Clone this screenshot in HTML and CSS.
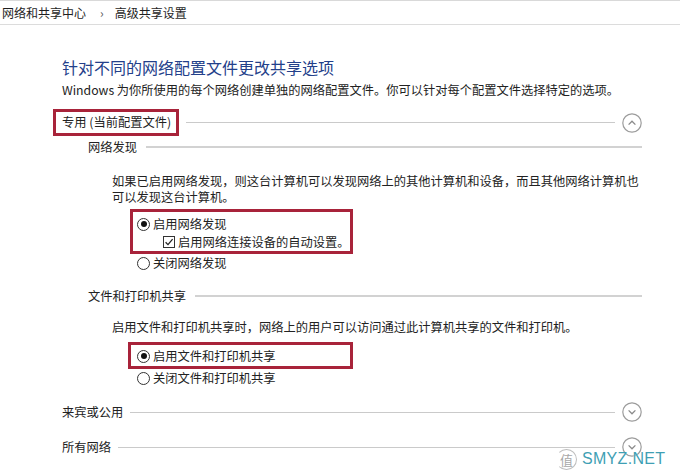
FILE: index.html
```html
<!DOCTYPE html>
<html lang="zh-CN">
<head>
<meta charset="utf-8">
<title>高级共享设置</title>
<link rel="stylesheet" href="styles.css">
</head>
<body>
<div class="crumb">
  <span>网络和共享中心</span><span class="sep">›</span><span>高级共享设置</span>
</div>
<div class="main">
  <h1 class="title">针对不同的网络配置文件更改共享选项</h1>
  <p class="desc">Windows 为你所使用的每个网络创建单独的网络配置文件。你可以针对每个配置文件选择特定的选项。</p>

  <div class="sec sec-first">
    <span class="sec-label boxed">专用 (当前配置文件)</span>
    <span class="rule"></span>
    <span class="toggle"><svg width="20" height="20" viewBox="0 0 20 20"><circle cx="10" cy="10" r="9.2" fill="none" stroke="#9c9c9c" stroke-width="1.2"/><path d="M6.6 11.6 L10 8.2 L13.4 11.6" fill="none" stroke="#8a8a8a" stroke-width="1.3"/></svg></span>
  </div>

  <div class="sub sub-net">
    <span class="sub-label">网络发现</span>
    <span class="rule"></span>
  </div>
  <p class="para para-net">如果已启用网络发现，则这台计算机可以发现网络上的其他计算机和设备，而且其他网络计算机也<br>可以发现这台计算机。</p>

  <div class="opts opts-net">
    <div class="box box-net">
      <div class="opt"><span class="radio checked"></span><span>启用网络发现</span></div>
      <div class="opt opt-check"><span class="check"><svg width="12" height="12" viewBox="0 0 12 12"><rect x="0.5" y="0.5" width="11" height="11" fill="#fff" stroke="#333" stroke-width="1"/><path d="M2.6 6.2 L5 8.6 L9.6 3.2" fill="none" stroke="#222" stroke-width="1.3"/></svg></span><span>启用网络连接设备的自动设置。</span></div>
    </div>
    <div class="opt opt-plain"><span class="radio"></span><span>关闭网络发现</span></div>
  </div>

  <div class="sub sub-file">
    <span class="sub-label">文件和打印机共享</span>
    <span class="rule"></span>
  </div>
  <p class="para para-file">启用文件和打印机共享时，网络上的用户可以访问通过此计算机共享的文件和打印机。</p>

  <div class="opts opts-file">
    <div class="box box-file">
      <div class="opt"><span class="radio checked"></span><span>启用文件和打印机共享</span></div>
    </div>
    <div class="opt opt-plain"><span class="radio"></span><span>关闭文件和打印机共享</span></div>
  </div>

  <div class="sec sec-guest">
    <span class="sec-label">来宾或公用</span>
    <span class="rule"></span>
    <span class="toggle"><svg width="20" height="20" viewBox="0 0 20 20"><circle cx="10" cy="10" r="9.2" fill="none" stroke="#9c9c9c" stroke-width="1.2"/><path d="M6.6 8.4 L10 11.8 L13.4 8.4" fill="none" stroke="#8a8a8a" stroke-width="1.3"/></svg></span>
  </div>

  <div class="sec sec-all">
    <span class="sec-label">所有网络</span>
    <span class="rule"></span>
    <span class="toggle"><svg width="20" height="20" viewBox="0 0 20 20"><circle cx="10" cy="10" r="9.2" fill="none" stroke="#9c9c9c" stroke-width="1.2"/><path d="M6.6 8.4 L10 11.8 L13.4 8.4" fill="none" stroke="#8a8a8a" stroke-width="1.3"/></svg></span>
  </div>
</div>

<div class="watermark">
  <span class="wm-logo">值</span><span class="wm-text">SMYZ.NET</span>
</div>
</body>
</html>
```

FILE: styles.css
```css
html, body {
  margin: 0;
  padding: 0;
  background: #ffffff;
}
body {
  width: 680px;
  height: 476px;
  overflow: hidden;
  position: relative;
  font-family: "Noto Sans CJK SC", "Noto Sans", sans-serif;
  font-size: 12.25px;
  color: #222222;
}

.crumb {
  height: 23px;
  border-top: 1px solid #d9d9d9;
  border-bottom: 1px solid #dcdcdc;
  line-height: 24px;
  padding-left: 2px;
  font-size: 12px;
  color: #1e1e1e;
  white-space: nowrap;
}
.crumb .sep {
  margin: 0 11px 0 14px;
  color: #555;
}

.main {
  padding: 0 38px 0 62px;
}

.title {
  margin: 31px 0 0 0;
  font-size: 16px;
  font-weight: normal;
  line-height: 22px;
  color: #23408a;
  white-space: nowrap;
}
.desc {
  margin: 3px 0 0 0;
  line-height: 18px;
  white-space: nowrap;
}

.sec {
  display: flex;
  align-items: center;
  height: 27px;
}
.sec-first { margin-top: 10px; }
.sec-guest { margin-top: 14px; height: 22px; }
.sec-all { margin-top: 13px; height: 22px; }

.sec-label {
  white-space: nowrap;
  line-height: 21px;
}
.boxed {
  margin-left: -9px;
  padding: 0 5px 0 6px;
  border: 3px solid #a8233a;
}
.rule {
  flex: 1;
  height: 1px;
  background: #cacaca;
  margin: 0 7px;
}
.toggle {
  width: 20px;
  height: 20px;
  display: block;
  flex: none;
}
.toggle svg { display: block; }

.sub {
  display: flex;
  align-items: center;
  height: 20px;
  margin-left: 26px;
}
.sub .rule {
  margin: 0 0 0 9px;
  background: #d2d2d2;
  height: 1.5px;
}
.sub-net { margin-top: 1px; }
.sub-file { margin-top: 14px; }
.sub-label { white-space: nowrap; }

.para {
  margin: 0 0 0 50px;
  line-height: 16px;
  white-space: nowrap;
}
.para-net { margin-top: 16px; }
.para-file { margin-top: 13px; }

.opts {
  margin-left: 68px;
}
.opts-net { margin-top: 4px; }
.opts-file { margin-top: 7px; }

.box {
  width: 213px;
  border: 3px solid #a8233a;
  padding-left: 4px;
}
.box-net { padding-top: 3px; padding-bottom: 0; }
.box-file { padding-top: 2px; padding-bottom: 1px; }
.box-file { margin-left: -2px; padding-left: 6px; }

.opt {
  display: flex;
  align-items: center;
  height: 18px;
  white-space: nowrap;
}
.opt-plain { padding-left: 7px; }
.opt-check { padding-left: 26px; }

.radio {
  width: 11px;
  height: 11px;
  border: 1px solid #333;
  border-radius: 50%;
  margin-right: 3px;
  position: relative;
  flex: none;
  background: #fff;
}
.radio.checked::after {
  content: "";
  position: absolute;
  left: 2.5px;
  top: 2.5px;
  width: 6px;
  height: 6px;
  border-radius: 50%;
  background: #111;
}
.check {
  width: 12px;
  height: 12px;
  margin-right: 3px;
  flex: none;
}
.check svg { display: block; }

.watermark {
  position: absolute;
  left: 556px;
  top: 448px;
  display: flex;
  align-items: center;
  height: 22px;
}
.wm-logo {
  width: 19px;
  height: 19px;
  border-radius: 50%;
  border: 1.5px solid #bdbdbd;
  border-left-color: transparent;
  color: #a8a8a8;
  font-size: 13px;
  line-height: 19px;
  text-align: center;
  margin-right: 5px;
}
.wm-text {
  font-family: "Liberation Sans", Arial, sans-serif;
  font-size: 16px;
  color: #3f9fb4;
  letter-spacing: 0.3px;
  text-shadow: 0 0 1px #ffffff;
}
```
